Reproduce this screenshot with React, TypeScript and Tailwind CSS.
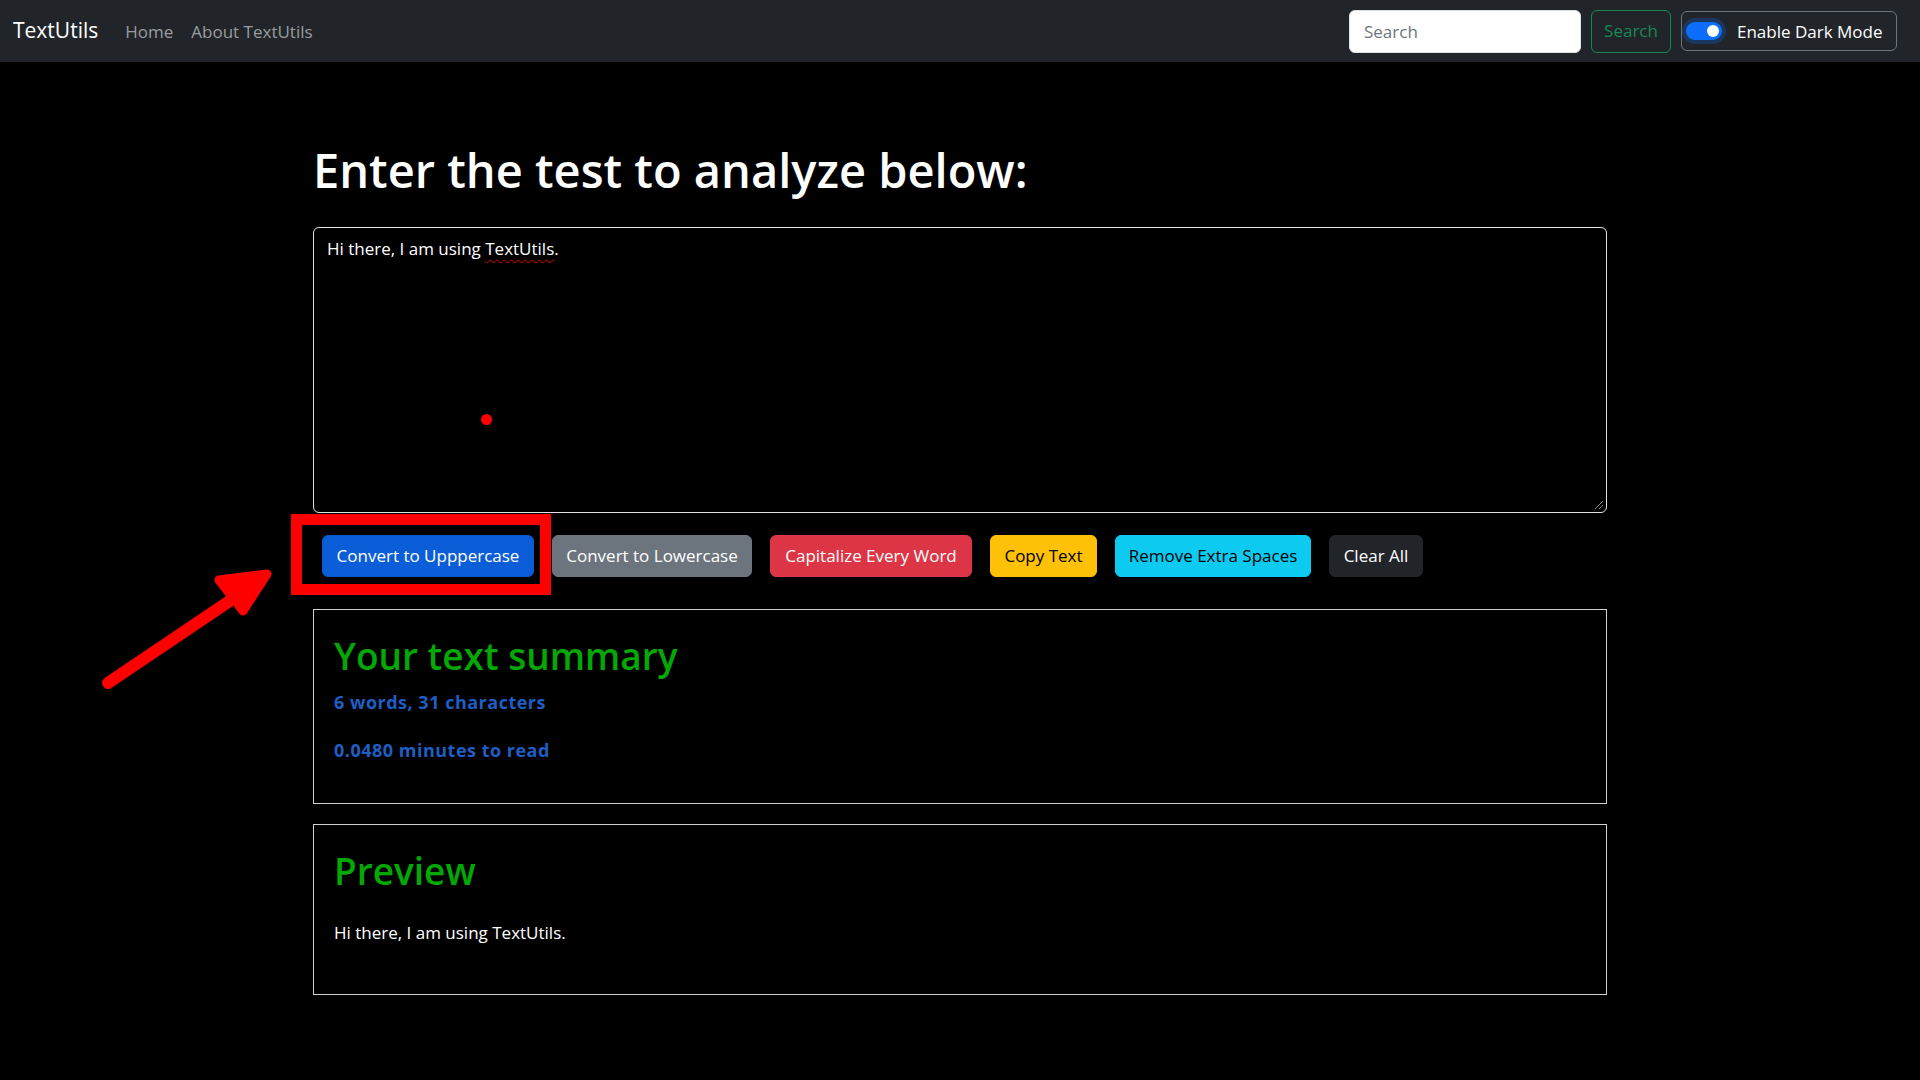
import React from 'react';

const buttons = [
  { label: 'Convert to Upppercase', cls: 'w-[212px] bg-[#0b5ed7] border-[#0a58ca] text-white' },
  { label: 'Convert to Lowercase', cls: 'w-[200px] bg-[#6c757d] border-[#6c757d] text-white' },
  { label: 'Capitalize Every Word', cls: 'w-[202px] bg-[#dc3545] border-[#dc3545] text-white' },
  { label: 'Copy Text', cls: 'w-[107px] bg-[#ffc107] border-[#ffc107] text-black' },
  { label: 'Remove Extra Spaces', cls: 'w-[196px] bg-[#0dcaf0] border-[#0dcaf0] text-black' },
  { label: 'Clear All', cls: 'w-[94px] bg-[#212529] border-[#212529] text-white' },
];

const App = () => {
  const text = 'Hi there, I am using TextUtils.';
  const words = text.split(/\s+/).filter((w) => w.length > 0).length;

  return (
    <div className="relative min-h-[1080px] w-full bg-black font-['Open_Sans',sans-serif] text-white">
      {/* Navbar */}
      <nav className="flex h-[62px] items-center bg-[#212529] pl-[13px] pr-[23px]">
        <a href="#" className="mr-[18px] text-[21px] leading-[1.5] text-white">
          TextUtils
        </a>
        <a href="#" className="px-[9px] text-[17px] leading-[27px] text-[#9a9c9f]">
          Home
        </a>
        <a href="#" className="px-[9px] text-[17px] leading-[27px] text-[#9a9c9f]">
          About TextUtils
        </a>
        <div className="ml-auto flex items-center">
          <input
            type="search"
            placeholder="Search"
            className="h-[43px] w-[232px] rounded-[6px] border border-[#dee2e6] bg-white px-[14px] text-[17px] text-black outline-none placeholder:text-[#6c757d]"
          />
          <button className="ml-[10px] h-[43px] w-[80px] rounded-[6px] border border-[#198754] text-[17px] text-[#198754]">
            Search
          </button>
          <div className="ml-[10px] flex h-[40px] w-[216px] items-center rounded-[6px] border border-[#6c757d] pl-[4px]">
            <span className="relative h-[18px] w-[36px] rounded-full bg-[#0d6efd] shadow-[0_0_0_4px_rgba(13,110,253,0.25)]">
              <span className="absolute right-[3px] top-[3px] h-[12px] w-[12px] rounded-full bg-white" />
            </span>
            <span className="ml-[15px] text-[17px] leading-[27px] text-white">Enable Dark Mode</span>
          </div>
        </div>
      </nav>

      {/* Main */}
      <main className="mx-auto w-[1294px] pt-[80px]">
        <h1 className="mb-[27px] text-[47px] font-semibold leading-[1.225] text-white">
          Enter the test to analyze below:
        </h1>

        <div className="relative h-[286px] rounded-[6px] border border-[#dee2e6] bg-black px-[13px] py-[7px] text-[17px] leading-[27px]">
          Hi there, I am using{' '}
          <span className="underline decoration-[#e00000] decoration-wavy decoration-1 underline-offset-[4px]">
            TextUtils
          </span>
          .
          <svg className="absolute bottom-[2px] right-[2px]" width="10" height="10" viewBox="0 0 10 10">
            <line x1="1" y1="9" x2="9" y2="1" stroke="#8a8a8a" strokeWidth="1" />
            <line x1="5" y1="9" x2="9" y2="5" stroke="#8a8a8a" strokeWidth="1" />
          </svg>
        </div>

        <div className="mt-[22px] flex gap-[18px] pl-[9px]">
          {buttons.map((b) => (
            <button
              key={b.label}
              className={`h-[42px] rounded-[6px] border text-center text-[17px] leading-[27px] ${b.cls}`}
            >
              {b.label}
            </button>
          ))}
        </div>

        {/* Summary */}
        <section className="mt-[32px] h-[195px] border border-[#d0d0d0] px-[20px] pt-[24px]">
          <h2 className="text-[37px] font-semibold leading-[1.2] text-[#04a804]">Your text summary</h2>
          <p className="mt-[11px] text-[18px] font-bold leading-[27px] tracking-[0.5px] text-[#1f5ec4]">
            {words} words, {text.length} characters
          </p>
          <p className="mt-[21px] text-[18px] font-bold leading-[27px] tracking-[0.5px] text-[#1f5ec4]">
            {(0.008 * words).toFixed(4)} minutes to read
          </p>
        </section>

        {/* Preview */}
        <section className="mt-[20px] h-[171px] border border-[#d0d0d0] px-[20px] pt-[24px]">
          <h2 className="text-[37px] font-semibold leading-[1.2] text-[#04a804]">Preview</h2>
          <p className="mt-[26px] text-[17px] leading-[27px] text-white">{text}</p>
        </section>
      </main>

      {/* Annotations */}
      <div className="pointer-events-none absolute left-[291px] top-[514px] h-[81px] w-[260px] border-[11px] border-[#ff0000]" />
      <div className="pointer-events-none absolute left-[481px] top-[414px] h-[11px] w-[11px] rounded-full bg-[#ff0000]" />
      <svg className="pointer-events-none absolute left-0 top-0" width="400" height="720" viewBox="0 0 400 720">
        <line x1="108" y1="683" x2="240" y2="594" stroke="#ff0000" strokeWidth="12" strokeLinecap="round" />
        <polygon
          points="267,574 219,580 243,611"
          fill="#ff0000"
          stroke="#ff0000"
          strokeWidth="9"
          strokeLinejoin="round"
        />
      </svg>
    </div>
  );
};

export default App;
